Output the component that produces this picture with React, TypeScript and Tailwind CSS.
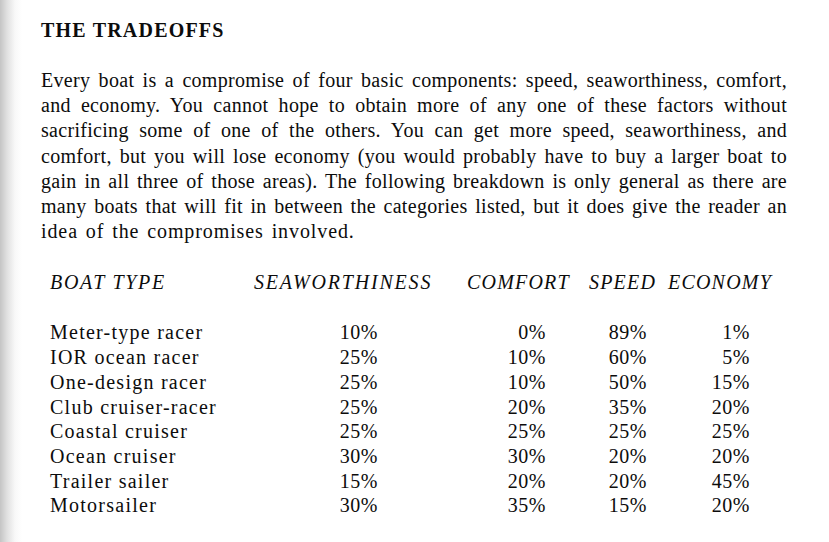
const bodyLines = [
  "Every boat is a compromise of four basic components: speed, seaworthiness, comfort,",
  "and economy. You cannot hope to obtain more of any one of these factors without",
  "sacrificing some of one of the others. You can get more speed, seaworthiness, and",
  "comfort, but you will lose economy (you would probably have to buy a larger boat to",
  "gain in all three of those areas). The following breakdown is only general as there are",
  "many boats that will fit in between the categories listed, but it does give the reader an",
  "idea of the compromises involved.",
];

const rows = [
  ["Meter-type racer", "10%", "0%", "89%", "1%"],
  ["IOR ocean racer", "25%", "10%", "60%", "5%"],
  ["One-design racer", "25%", "10%", "50%", "15%"],
  ["Club cruiser-racer", "25%", "20%", "35%", "20%"],
  ["Coastal cruiser", "25%", "25%", "25%", "25%"],
  ["Ocean cruiser", "30%", "30%", "20%", "20%"],
  ["Trailer sailer", "15%", "20%", "20%", "45%"],
  ["Motorsailer", "30%", "35%", "15%", "20%"],
];

export default function App() {
  return (
    <div className="min-h-[542px] w-full bg-[linear-gradient(to_right,#c4c4c4,#e0e0e0_7px,#f8f8f8_15px,#ffffff_22px)] text-[#0c0c0c] font-['Liberation_Serif',serif]">
      <div className="pl-[41px] pt-[18px]">
        {/* Heading */}
        <h1 className="text-[20px] leading-[24px] font-bold tracking-[1.2px]">THE TRADEOFFS</h1>

        {/* Paragraph, one line per div so the breaks match the page */}
        <div className="mt-[26px] w-[746px] text-[20px] leading-[25.2px] tracking-[0.3px]">
          {bodyLines.map((line, i) => (
            <div
              key={i}
              className={
                i < bodyLines.length - 1
                  ? "whitespace-nowrap text-justify [text-align-last:justify]"
                  : "whitespace-nowrap tracking-[0.9px] [word-spacing:2px]"
              }
            >
              {line}
            </div>
          ))}
        </div>

        {/* Table */}
        <div className="ml-[9px] mt-[26px]">
          <div className="flex text-[20px] leading-[24px] italic tracking-[1.2px]">
            <span className="w-[204px] tracking-[1.7px]">BOAT TYPE</span>
            <span className="w-[213px] tracking-[1.8px]">SEAWORTHINESS</span>
            <span className="w-[122px]">COMFORT</span>
            <span className="w-[79px]">SPEED</span>
            <span>ECONOMY</span>
          </div>

          <div className="mt-[26px] text-[20px] leading-[24.7px]">
            {rows.map((r) => (
              <div key={r[0]} className="grid grid-cols-[270px_58px_168px_101px_103px]">
                <span className="tracking-[1.25px]">{r[0]}</span>
                <span className="text-right tracking-[0.5px]">{r[1]}</span>
                <span className="text-right tracking-[0.5px]">{r[2]}</span>
                <span className="text-right tracking-[0.5px]">{r[3]}</span>
                <span className="text-right tracking-[0.5px]">{r[4]}</span>
              </div>
            ))}
          </div>
        </div>
      </div>
    </div>
  );
}
